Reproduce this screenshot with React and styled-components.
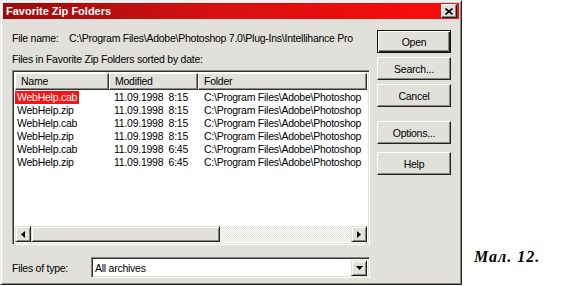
import React from "react";
import styled, { createGlobalStyle } from "styled-components";

const Global = createGlobalStyle`
  html, body {
    margin: 0;
    padding: 0;
    background: #fff;
  }
  body {
    font-family: "Liberation Sans", Arial, sans-serif;
    font-size: 10.5px;
    letter-spacing: -0.25px;
    color: #000;
  }
`;

const Page = styled.div`
  display: flex;
  align-items: flex-start;
  width: 580px;
  height: 286px;
`;

const Window = styled.div`
  box-sizing: border-box;
  width: 462px;
  height: 285px;
  background: #e2e0db;
  border: 1px solid;
  border-color: #eeece8 #222 #222 #eeece8;
  box-shadow: inset 1px 1px 0 #fff, inset -1px -1px 0 #8a8780;
  padding: 2px;
  display: flex;
  flex-direction: column;
`;

const TitleBar = styled.div`
  height: 16px;
  display: flex;
  align-items: center;
  justify-content: space-between;
  padding: 0 2px 0 3px;
  background: linear-gradient(90deg, #9c0b0b 0%, #d41010 45%, #fb0c0c 100%);
  color: #fff;
  font-weight: bold;
  font-size: 11px;
  letter-spacing: 0;
`;

const CloseBtn = styled.div`
  box-sizing: border-box;
  width: 16px;
  height: 14px;
  background: #e2e0db;
  border: 1px solid;
  border-color: #fff #222 #222 #fff;
  box-shadow: inset -1px -1px 0 #8a8780;
  display: flex;
  align-items: center;
  justify-content: center;
`;

const Body = styled.div`
  flex: 1;
  display: flex;
  padding: 11px 0 0 9px;
  gap: 7px;
`;

const Main = styled.div`
  width: 358px;
  display: flex;
  flex-direction: column;
`;

const FileNameRow = styled.div`
  display: flex;
  height: 14px;
  align-items: center;
  margin-top: 1px;
  white-space: nowrap;
`;

const Label = styled.span`
  width: ${(p) => p.$w || "auto"};
  flex: none;
`;

const Caption = styled.div`
  margin-top: 7px;
  height: 14px;
  line-height: 14px;
`;

const ListView = styled.div`
  box-sizing: border-box;
  margin-top: 4px;
  height: 175px;
  background: #fff;
  border: 1px solid;
  border-color: #8a8780 #fff #fff #8a8780;
  box-shadow: inset 1px 1px 0 #333, inset -1px -1px 0 #e2e0db;
  padding: 2px;
  display: flex;
  flex-direction: column;
`;

const Header = styled.div`
  display: flex;
  height: 17px;
`;

const HeadCell = styled.div`
  box-sizing: border-box;
  width: ${(p) => p.$w}px;
  flex: ${(p) => (p.$grow ? 1 : "none")};
  background: #e2e0db;
  border: 1px solid;
  border-color: #fff #333 #333 #fff;
  box-shadow: inset -1px -1px 0 #8a8780;
  padding-left: 5px;
  line-height: 15px;
  overflow: hidden;
`;

const Rows = styled.div`
  flex: 1;
  padding-top: 1px;
`;

const Row = styled.div`
  display: flex;
  height: 13px;
  line-height: 13px;
  white-space: nowrap;
`;

const Cell = styled.div`
  width: ${(p) => p.$w}px;
  flex: none;
  padding-left: ${(p) => p.$pad}px;
  box-sizing: border-box;
  overflow: hidden;
`;

const Name = styled.span`
  display: inline-block;
  padding: 0 2px 0 2px;
  background: ${(p) => (p.$sel ? "#ff1010" : "transparent")};
  color: ${(p) => (p.$sel ? "#fff" : "#000")};
`;

const HScroll = styled.div`
  display: flex;
  height: 16px;
`;

const ArrowBtn = styled.div`
  box-sizing: border-box;
  width: 16px;
  height: 16px;
  flex: none;
  background: #e2e0db;
  border: 1px solid;
  border-color: #e2e0db #222 #222 #e2e0db;
  box-shadow: inset 1px 1px 0 #fff, inset -1px -1px 0 #8a8780;
  display: flex;
  align-items: center;
  justify-content: center;
`;

const Track = styled.div`
  flex: 1;
  display: flex;
  background-color: #f4f3f0;
  background-image: repeating-conic-gradient(#e2e0db 0 25%, #fff 0 50%);
  background-size: 2px 2px;
`;

const Thumb = styled.div`
  box-sizing: border-box;
  width: 189px;
  background: #e2e0db;
  border: 1px solid;
  border-color: #e2e0db #222 #222 #e2e0db;
  box-shadow: inset 1px 1px 0 #fff, inset -1px -1px 0 #8a8780;
`;

const TypeRow = styled.div`
  display: flex;
  align-items: center;
  margin-top: 12px;
`;

const Combo = styled.div`
  box-sizing: border-box;
  flex: 1;
  height: 21px;
  background: #fff;
  border: 1px solid;
  border-color: #8a8780 #fff #fff #8a8780;
  box-shadow: inset 1px 1px 0 #333, inset -1px -1px 0 #e2e0db;
  padding: 2px;
  display: flex;
  align-items: center;
`;

const ComboText = styled.div`
  flex: 1;
  padding-left: 1px;
`;

const Buttons = styled.div`
  display: flex;
  flex-direction: column;
  width: 74px;
`;

const Button = styled.div`
  box-sizing: border-box;
  height: 23px;
  margin-top: ${(p) => p.$mt || 0}px;
  background: #e2e0db;
  border: 1px solid;
  border-color: ${(p) => (p.$default ? "#111" : "#fff #222 #222 #fff")};
  box-shadow: ${(p) =>
    p.$default
      ? "inset 1px 1px 0 #fff, inset -1px -1px 0 #222, inset -2px -2px 0 #8a8780"
      : "inset -1px -1px 0 #8a8780"};
  display: flex;
  align-items: center;
  justify-content: center;
`;

const Figure = styled.div`
  margin: 248px 0 0 12px;
  font-family: "Liberation Serif", "Times New Roman", serif;
  font-weight: bold;
  font-style: italic;
  font-size: 16px;
  letter-spacing: 1px;
  white-space: nowrap;
`;

const Tri = ({ dir }) => {
  const pts = {
    left: "5,1 1,4.5 5,8",
    right: "1,1 5,4.5 1,8",
    down: "0,1 7,1 3.5,5",
  }[dir];
  const w = dir === "down" ? 7 : 6;
  return (
    <svg width={w} height={dir === "down" ? 6 : 9} viewBox={`0 0 ${w} ${dir === "down" ? 6 : 9}`}>
      <polygon points={pts} fill="#000" />
    </svg>
  );
};

const files = [
  ["WebHelp.cab", "8:15"],
  ["WebHelp.zip", "8:15"],
  ["WebHelp.cab", "8:15"],
  ["WebHelp.zip", "8:15"],
  ["WebHelp.cab", "6:45"],
  ["WebHelp.zip", "6:45"],
];

const App = () => {
  return (
    <Page>
      <Global />
      <Window>
        <TitleBar>
          <span>Favorite Zip Folders</span>
          <CloseBtn>
            <svg width="8" height="7" viewBox="0 0 8 7">
              <path d="M0.5 0.5 L7.5 6.5 M7.5 0.5 L0.5 6.5" stroke="#000" strokeWidth="1.6" />
            </svg>
          </CloseBtn>
        </TitleBar>
        <Body>
          <Main>
            <FileNameRow>
              <Label $w="57px">File name:</Label>
              <span>C:\Program Files\Adobe\Photoshop 7.0\Plug-Ins\Intellihance Pro</span>
            </FileNameRow>
            <Caption>Files in Favorite Zip Folders sorted by date:</Caption>
            <ListView>
              <Header>
                <HeadCell $w={94}>Name</HeadCell>
                <HeadCell $w={89}>Modified</HeadCell>
                <HeadCell $grow>Folder</HeadCell>
              </Header>
              <Rows>
                {files.map(([n, t], i) => (
                  <Row key={i}>
                    <Cell $w={94} $pad={0}>
                      <Name $sel={i === 0}>{n}</Name>
                    </Cell>
                    <Cell $w={94} $pad={5}>
                      11.09.1998&nbsp;&nbsp;{t}
                    </Cell>
                    <Cell $w={170} $pad={1}>
                      C:\Program Files\Adobe\Photoshop
                    </Cell>
                  </Row>
                ))}
              </Rows>
              <HScroll>
                <ArrowBtn>
                  <Tri dir="left" />
                </ArrowBtn>
                <Track>
                  <Thumb />
                </Track>
                <ArrowBtn>
                  <Tri dir="right" />
                </ArrowBtn>
              </HScroll>
            </ListView>
            <TypeRow>
              <Label $w="79px">Files of type:</Label>
              <Combo>
                <ComboText>All archives</ComboText>
                <ArrowBtn>
                  <Tri dir="down" />
                </ArrowBtn>
              </Combo>
            </TypeRow>
          </Main>
          <Buttons>
            <Button $default>Open</Button>
            <Button $mt={4}>Search...</Button>
            <Button $mt={4}>Cancel</Button>
            <Button $mt={14}>Options...</Button>
            <Button $mt={8}>Help</Button>
          </Buttons>
        </Body>
      </Window>
      <Figure>Мал. 12.</Figure>
    </Page>
  );
};

export default App;
